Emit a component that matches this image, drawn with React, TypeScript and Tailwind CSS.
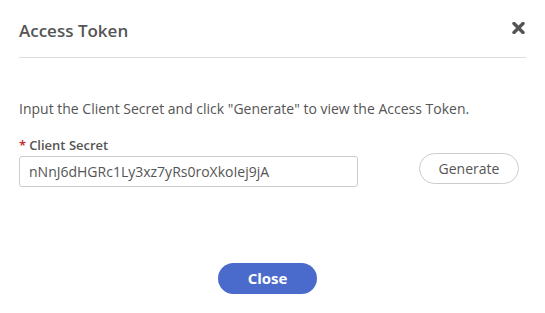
import React, { useState } from "react";

const CloseIcon: React.FC = () => (
  <svg width="13" height="12" viewBox="0 0 13 12" aria-hidden="true">
    <path
      d="M2 1.5 L11 10.5 M11 1.5 L2 10.5"
      stroke="#555555"
      strokeWidth="3.4"
      strokeLinecap="round"
    />
  </svg>
);

const App: React.FC = () => {
  const [secret, setSecret] = useState("nNnJ6dHGRc1Ly3xz7yRs0roXkoIej9jA");

  return (
    <div className="w-[545px] h-[313px] bg-white font-['Open_Sans',sans-serif] text-[#555555] overflow-hidden">
      {/* Header */}
      <div className="mx-[19px] h-[58px] flex items-center justify-between border-b border-[#dddddd] pt-[3px]">
        <h2 className="text-[17px] font-semibold leading-[23px]">Access Token</h2>
        <button className="mr-[1px] mb-[5px]" aria-label="Close">
          <CloseIcon />
        </button>
      </div>

      {/* Body */}
      <div className="px-[19px]">
        <p className="mt-[41px] text-[14px] leading-[20px]">
          Input the Client Secret and click "Generate" to view the Access Token.
        </p>

        <div className="mt-[18px] flex items-end">
          <div className="flex flex-col">
            <label className="text-[13px] font-semibold leading-[16px]">
              <span className="text-[#cc2222] mr-[3px]">*</span>
              Client Secret
            </label>
            <input
              value={secret}
              onChange={(e) => setSecret(e.target.value)}
              className="mt-[3px] w-[339px] h-[31px] border border-[#cccccc] rounded-[3px] px-[9px] text-[14px] text-[#555555] outline-none"
            />
          </div>
          <button className="ml-[61px] mb-[3px] w-[100px] h-[31px] rounded-full border border-[#cccccc] bg-white text-[14px] text-[#555555]">
            Generate
          </button>
        </div>
      </div>

      {/* Footer */}
      <div className="mt-[76px] flex justify-center pr-[10px]">
        <button className="w-[99px] h-[31px] rounded-full bg-[#4a6bcb] text-white text-[15px] font-bold">
          Close
        </button>
      </div>
    </div>
  );
};

export default App;
